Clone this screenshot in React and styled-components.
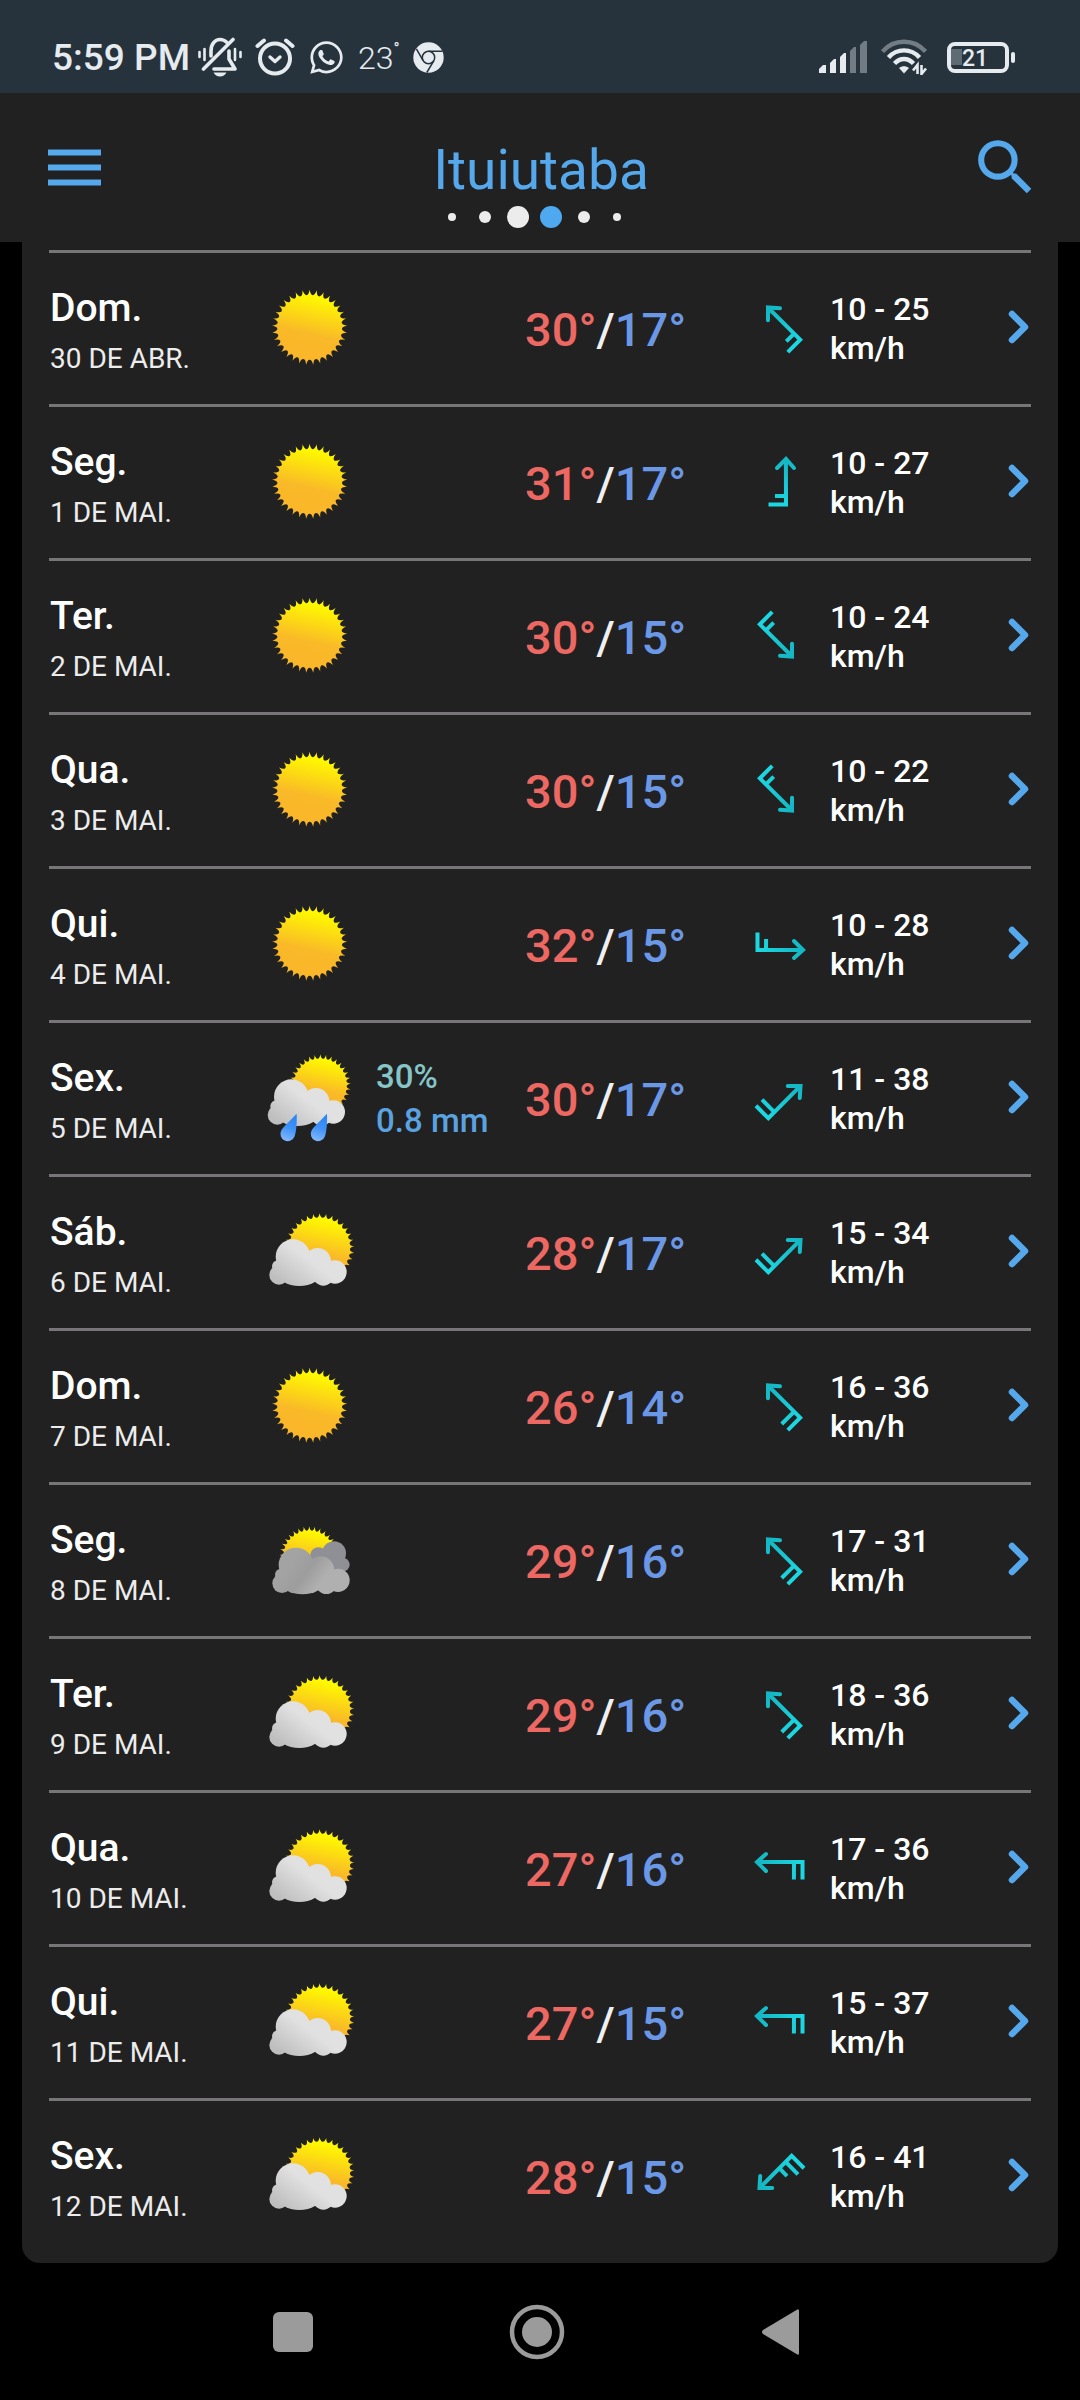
import React from 'react';
import styled, { createGlobalStyle } from 'styled-components';
import { FaWhatsapp } from 'react-icons/fa';
import { MdSearch } from 'react-icons/md';

const GlobalStyle = createGlobalStyle`
  * {
    box-sizing: border-box;
  }

  body {
    margin: 0;
    background: #000;
    color: #fff;
    font-family: Roboto, sans-serif;
  }
`;

const Page = styled.div`
  min-height: 100vh;
  display: flex;
  flex-direction: column;
`;

const StatusBar = styled.div`
  display: flex;
  align-items: center;
  justify-content: space-between;
  padding: 35px 64px 14px 52px;
  background: #26333d;
  color: #e6ebef;
`;

const StatusGroup = styled.div`
  display: flex;
  align-items: center;
  gap: ${(props) => props.$gap}px;
`;

const Clock = styled.span`
  padding-top: 2px;
  font-size: 37px;
  font-weight: 500;
  line-height: 42px;
`;

const StatusTemp = styled.span`
  display: flex;
  align-items: flex-start;
  padding-top: 2px;
  font-size: 32px;
  font-weight: 300;
  line-height: 42px;
`;

const Degree = styled.span`
  font-size: 16px;
  font-weight: 500;
  line-height: 24px;
`;

const Header = styled.header`
  display: grid;
  grid-template-columns: 1fr auto 1fr;
  align-items: center;
  padding: 0 38px 0 48px;
  background: #212121;
`;

const IconButton = styled.button`
  display: flex;
  padding: 0;
  border: 0;
  background: none;
  color: #55a8eb;
  cursor: pointer;
  justify-self: ${(props) => props.$side || 'start'};
`;

const TitleBlock = styled.div`
  padding: 45px 8px 14px 0;
`;

const Title = styled.h1`
  margin: 0 0 4px;
  font-size: 55px;
  font-weight: 400;
  line-height: 64px;
  color: #55a8eb;
`;

const Dots = styled.div`
  display: flex;
  padding-left: 2px;
`;

const DotCell = styled.span`
  width: 33px;
  height: 22px;
  display: flex;
  align-items: center;
  justify-content: center;
`;

const Dot = styled.span`
  width: ${(props) => props.$size}px;
  height: ${(props) => props.$size}px;
  border-radius: 50%;
  background: ${(props) => (props.$active ? '#4fa9f0' : '#ececec')};
`;

const Card = styled.main`
  margin: 0 22px;
  padding: 8px 27px 11px;
  background: #212121;
  border-radius: 0 0 18px 18px;
`;

const DayList = styled.ul`
  margin: 0;
  padding: 0;
  list-style: none;
`;

const DayRow = styled.li`
  display: grid;
  grid-template-columns: 213fr 114fr 149fr 226fr 79fr 151fr 50fr;
  align-items: center;
  padding: 27px 0 28px;
  border-top: 3px solid #777577;
  white-space: nowrap;
`;

const DayBlock = styled.div`
  padding: 5px 0 0 1px;
`;

const DayName = styled.h2`
  margin: 0 0 11px;
  font-size: 39px;
  font-weight: 500;
  line-height: 46px;
`;

const DayDate = styled.p`
  margin: 0;
  font-size: 28px;
  line-height: 34px;
  color: #ececec;
`;

const Rain = styled.div`
  padding-top: 2px;
  font-size: 33px;
  font-weight: 500;
  line-height: 44px;
  color: #5aa3e0;
`;

const Chance = styled.div`
  color: #86c5c8;
`;

const Temps = styled.div`
  padding-top: 4px;
  font-size: 47px;
  font-weight: 500;
  line-height: 56px;
  color: #f0f0f0;
`;

const High = styled.span`
  color: #ed6863;
`;

const Low = styled.span`
  color: #6b98e6;
`;

const Wind = styled.div`
  padding-top: 2px;
  font-size: 32px;
  font-weight: 500;
  line-height: 39px;
`;

const NavBar = styled.nav`
  flex: 1;
  display: flex;
  align-items: center;
  justify-content: center;
  gap: 188px;
  padding: 40px 7px 40px 0;
`;

const DAYS = [
  { day: 'Dom.', date: '30 DE ABR.', icon: 'sun', high: 30, low: 17, angle: -45, wind: '10 - 25' },
  { day: 'Seg.', date: '1 DE MAI.', icon: 'sun', high: 31, low: 17, angle: 0, wind: '10 - 27' },
  { day: 'Ter.', date: '2 DE MAI.', icon: 'sun', high: 30, low: 15, angle: 135, wind: '10 - 24' },
  { day: 'Qua.', date: '3 DE MAI.', icon: 'sun', high: 30, low: 15, angle: 135, wind: '10 - 22' },
  { day: 'Qui.', date: '4 DE MAI.', icon: 'sun', high: 32, low: 15, angle: 90, wind: '10 - 28' },
  { day: 'Sex.', date: '5 DE MAI.', icon: 'rain', high: 30, low: 17, angle: 45, wind: '11 - 38', level: 2, chance: '30%', rain: '0.8 mm' },
  { day: 'Sáb.', date: '6 DE MAI.', icon: 'partly', high: 28, low: 17, angle: 45, wind: '15 - 34', level: 2 },
  { day: 'Dom.', date: '7 DE MAI.', icon: 'sun', high: 26, low: 14, angle: -45, wind: '16 - 36', level: 2 },
  { day: 'Seg.', date: '8 DE MAI.', icon: 'cloudy', high: 29, low: 16, angle: -45, wind: '17 - 31', level: 2 },
  { day: 'Ter.', date: '9 DE MAI.', icon: 'partly', high: 29, low: 16, angle: -45, wind: '18 - 36', level: 2 },
  { day: 'Qua.', date: '10 DE MAI.', icon: 'partly', high: 27, low: 16, angle: -90, wind: '17 - 36', level: 2 },
  { day: 'Qui.', date: '11 DE MAI.', icon: 'partly', high: 27, low: 15, angle: -90, wind: '15 - 37', level: 2 },
  { day: 'Sex.', date: '12 DE MAI.', icon: 'partly', high: 28, low: 15, angle: -135, wind: '16 - 41', level: 3 },
];

const DOTS = [8, 12, 22, 22, 12, 8];

// Disc with a ring of small curved spikes
const sunPath = (cx, cy, inner, outer) => {
  const count = 33;
  const step = (Math.PI * 2) / count;
  const at = (r, a) => `${(cx + r * Math.sin(a)).toFixed(1)} ${(cy - r * Math.cos(a)).toFixed(1)}`;
  let d = `M${at(outer, 0)}`;
  for (let i = 0; i < count; i += 1) {
    const a = i * step;
    d += `Q${at(inner, a + step * 0.15)} ${at(inner, a + step * 0.5)}`;
    d += `Q${at(inner, a + step * 0.85)} ${at(outer, a + step)}`;
  }
  return `${d}Z`;
};

const Sun = ({ cx, cy, inner, outer }) => (
  <path d={sunPath(cx, cy, inner, outer)} fill="url(#sunFill)" />
);

const Cloud = ({ x = 0, y = 0, fill }) => (
  <g transform={`translate(${x} ${y})`} fill={fill}>
    <circle cx="93" cy="158" r="52" />
    <circle cx="167" cy="172" r="40" />
    <circle cx="219" cy="204" r="35" />
    <circle cx="51" cy="213" r="29" />
    <circle cx="48" cy="187" r="18" />
    <circle cx="184" cy="213" r="32" />
    <ellipse cx="112" cy="206" rx="66" ry="40" />
    <path d="M60 160H200V225H50Z" />
  </g>
);

const Drop = ({ x, y }) => (
  <path
    transform={`translate(${x} ${y})`}
    d="M27 -61C28 -30 26 -10 21 7A22 22 0 1 1 -19 -11C-10 -25 12 -45 27 -61Z"
    fill="url(#dropFill)"
  />
);

const WeatherIcon = ({ type }) => (
  <svg width="96" height="96" viewBox="0 0 288 288" role="img" aria-label={type}>
    {type === 'sun' && <Sun cx={143} cy={142} inner={97} outer={113} />}
    {type === 'partly' && (
      <>
        <Sun cx={173} cy={132} inner={91} outer={104} />
        <Cloud fill="url(#cloudFill)" />
      </>
    )}
    {type === 'rain' && (
      <>
        <Sun cx={175} cy={105} inner={79} outer={92} />
        <Cloud x={-5} y={-18} fill="url(#cloudFill)" />
        <Drop x={77} y={252} />
        <Drop x={168} y={252} />
      </>
    )}
    {type === 'cloudy' && (
      <>
        <Sun cx={142} cy={133} inner={77} outer={90} />
        <g fill="#8f9095">
          <circle cx="216" cy="124" r="36" />
          <circle cx="242" cy="158" r="21" />
          <circle cx="169" cy="131" r="25" />
          <path d="M165 120H235V175H165Z" />
        </g>
        <Cloud x={9} y={1} fill="url(#greyCloudFill)" />
      </>
    )}
  </svg>
);

// Arrow pointing up with its barbs at the tail, turned to the wind direction
const WindIcon = ({ angle, level = 1 }) => (
  <svg width="58" height="58" viewBox="-29 -29 58 58" aria-hidden="true">
    <g transform={`rotate(${angle})`} fill="none" stroke="url(#windStroke)" strokeWidth="4">
      <path d="M-3 -14L6 -23L14 -14" strokeLinecap="round" />
      <path d="M5.9 -22L6 22.5H-11.5" />
      <path d={level === 1 ? 'M6 14L-5 13.9' : 'M6 14L-11.5 13.9'} />
      {level === 3 && <path d="M6 5L-5 4.9" />}
    </g>
  </svg>
);

const SharedFills = () => (
  <svg width="0" height="0" style={{ display: 'block' }} aria-hidden="true">
    <defs>
      <linearGradient id="sunFill" x1="0.6" y1="0.05" x2="0.4" y2="0.95">
        <stop offset="0.05" stopColor="#fff900" />
        <stop offset="0.6" stopColor="#f9b928" />
        <stop offset="1" stopColor="#fab62a" />
      </linearGradient>
      <linearGradient id="cloudFill" gradientUnits="userSpaceOnUse" x1="60" y1="240" x2="125" y2="155">
        <stop offset="0" stopColor="#bebebe" />
        <stop offset="1" stopColor="#e1e1e1" />
      </linearGradient>
      <linearGradient id="greyCloudFill" gradientUnits="userSpaceOnUse" x1="80" y1="150" x2="165" y2="215">
        <stop offset="0" stopColor="#a3a3a3" />
        <stop offset="0.5" stopColor="#9d9d9d" />
        <stop offset="1" stopColor="#b0b0b0" />
      </linearGradient>
      <linearGradient id="dropFill" x1="0.6" y1="0" x2="0.4" y2="1">
        <stop offset="0" stopColor="#2b84f5" />
        <stop offset="0.5" stopColor="#3f92f7" />
        <stop offset="1" stopColor="#82b8fb" />
      </linearGradient>
      <linearGradient id="windStroke" gradientUnits="userSpaceOnUse" x1="0" y1="-24" x2="0" y2="24">
        <stop offset="0" stopColor="#14b6c2" />
        <stop offset="1" stopColor="#1cd8e2" />
      </linearGradient>
    </defs>
  </svg>
);

const BellOffIcon = () => (
  <svg width="44" height="40" viewBox="0 0 44 40" fill="none" stroke="currentColor" strokeLinecap="round">
    <path d="M13 19V14C13 7 17 2.500 22 2.500C25 2.500 27 3.500 29 5.500M31 14V22L37 32H16" strokeWidth="3.600" strokeLinejoin="round" />
    <path d="M5.500 32L35 2.500" strokeWidth="3.600" />
    <path d="M1.500 15V20M6.500 12V23M37 12V23M42.500 15V20" strokeWidth="2.600" />
    <path d="M15.500 35.500H28.500C27 38 25 39.500 22 39.500C19 39.500 17 38 15.500 35.500Z" fill="currentColor" stroke="none" />
  </svg>
);

const AlarmIcon = () => (
  <svg width="40" height="40" viewBox="0 0 40 40" fill="none" stroke="currentColor" strokeLinecap="round">
    <circle cx="20" cy="21.500" r="15" strokeWidth="4" />
    <path d="M2.500 9L9 3.500M37.500 9L31 3.500" strokeWidth="4" />
    <path d="M15 20L20 24.500L25 20" strokeWidth="3.400" strokeLinejoin="round" />
  </svg>
);

const ChromeIcon = () => (
  <svg width="31" height="31" viewBox="0 0 31 31">
    <circle cx="15.500" cy="15.500" r="15.200" fill="currentColor" />
    <g fill="none" stroke="#26333d" strokeWidth="1.500">
      <circle cx="15.500" cy="15.500" r="6.200" />
      <path d="M15.500 9.300H29.500M10.100 18.600L3.400 6.800M20.900 18.600L13.800 30.500" />
    </g>
  </svg>
);

const SignalIcon = () => (
  <svg width="48" height="32" viewBox="0 0 48 32" fill="currentColor">
    <path d="M0 32V28L4 24H7V32ZM11 32V22L15 18H17V32ZM21 32V16L25 12H27V32Z" />
    <path d="M31 32V10L35 6H37V32ZM41 32V4L45 0H48V32Z" opacity="0.400" />
  </svg>
);

const WifiIcon = () => (
  <svg width="52" height="36" viewBox="0 0 52 36" fill="none" stroke="currentColor" strokeWidth="4.400">
    <path d="M1.500 12.500C13 -0.500 33 -0.500 44.500 12.500" opacity="0.400" />
    <path d="M7.500 18.500C16 9 30 9 38.500 18.500M13.500 24.500C19 18.500 27 18.500 32.500 24.500" />
    <path d="M18 29C21 26.500 25 26.500 28 29L23 34.500Z" fill="currentColor" stroke="none" />
    <path d="M36.500 35V26L32 31.500M40.500 26V35L45 29.500" strokeWidth="2.600" />
  </svg>
);

const BatteryIcon = () => (
  <svg width="69" height="31" viewBox="0 0 69 31">
    <rect x="2" y="2" width="58" height="27" rx="6" fill="none" stroke="currentColor" strokeWidth="4" />
    <rect x="4" y="7" width="11" height="16" fill="currentColor" opacity="0.300" />
    <rect x="64" y="10" width="4" height="11" rx="2" fill="currentColor" />
    <text x="15" y="24" fontFamily="Roboto, sans-serif" fontSize="23" fontWeight="500" fill="currentColor">21</text>
  </svg>
);

const MenuIcon = () => (
  <svg width="54" height="38" viewBox="0 0 54 38" fill="currentColor">
    <path d="M0 0.5H53V6.500H0ZM0 15.500H53V21.500H0ZM0 30.500H53V36.500H0Z" />
  </svg>
);

const ChevronIcon = () => (
  <svg width="26" height="38" viewBox="0 0 26 38" fill="none" stroke="currentColor" strokeWidth="6.500" strokeLinecap="round" strokeLinejoin="round">
    <path d="M7 5L20 18L7 31" />
  </svg>
);

const App = () => {
  return (
    <Page>
      <GlobalStyle />
      <SharedFills />
      <StatusBar>
        <StatusGroup $gap={8}>
          <Clock>5:59 PM</Clock>
          <StatusGroup $gap={13}>
            <BellOffIcon />
            <AlarmIcon />
            <FaWhatsapp size={37} />
            <StatusTemp>
              23<Degree>°</Degree>
            </StatusTemp>
            <ChromeIcon />
          </StatusGroup>
        </StatusGroup>
        <StatusGroup $gap={14}>
          <SignalIcon />
          <WifiIcon />
          <BatteryIcon />
        </StatusGroup>
      </StatusBar>

      <Header>
        <IconButton type="button" aria-label="Menu">
          <MenuIcon />
        </IconButton>
        <TitleBlock>
          <Title>Ituiutaba</Title>
          <Dots>
            {DOTS.map((size, i) => (
              <DotCell key={i}>
                <Dot $size={size} $active={i === 3} />
              </DotCell>
            ))}
          </Dots>
        </TitleBlock>
        <IconButton type="button" aria-label="Buscar" $side="end">
          <MdSearch size={73} />
        </IconButton>
      </Header>

      <Card>
        <DayList>
          {DAYS.map((item) => (
            <DayRow key={item.date}>
              <DayBlock>
                <DayName>{item.day}</DayName>
                <DayDate>{item.date}</DayDate>
              </DayBlock>
              <WeatherIcon type={item.icon} />
              <Rain>
                {item.chance && <Chance>{item.chance}</Chance>}
                {item.rain}
              </Rain>
              <Temps>
                <High>{item.high}°</High>/<Low>{item.low}°</Low>
              </Temps>
              <WindIcon angle={item.angle} level={item.level} />
              <Wind>
                {item.wind}
                <br />
                km/h
              </Wind>
              <IconButton type="button" aria-label={`Detalhes ${item.date}`} $side="end">
                <ChevronIcon />
              </IconButton>
            </DayRow>
          ))}
        </DayList>
      </Card>

      <NavBar>
        <IconButton type="button" aria-label="Recentes">
          <svg width="56" height="56" viewBox="0 0 56 56" fill="#9b9b9b">
            <rect x="8" y="8" width="40" height="40" rx="6" />
          </svg>
        </IconButton>
        <IconButton type="button" aria-label="Início">
          <svg width="56" height="56" viewBox="0 0 56 56" fill="#9b9b9b">
            <circle cx="28" cy="28" r="25" fill="none" stroke="#9b9b9b" strokeWidth="4.500" />
            <circle cx="28" cy="28" r="15" />
          </svg>
        </IconButton>
        <IconButton type="button" aria-label="Voltar">
          <svg width="56" height="56" viewBox="0 0 56 56" fill="#9b9b9b">
            <path d="M46 7V49Q46 52 43.500 50L10 30Q8 28 10 26L43.500 6Q46 4 46 7Z" />
          </svg>
        </IconButton>
      </NavBar>
    </Page>
  );
};

export default App;
